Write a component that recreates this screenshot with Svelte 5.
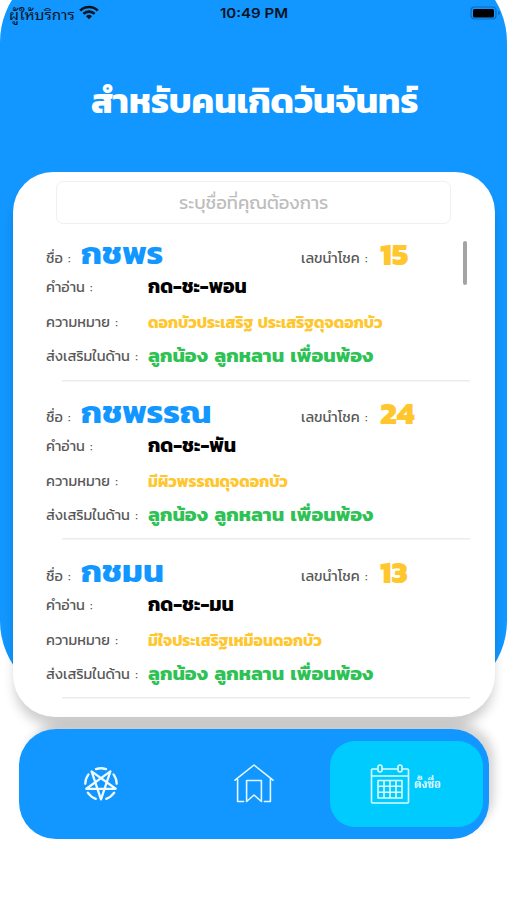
<script>
  const people = [
    { name: 'กชพร', nameW: 82, num: '15', read: 'กด-ชะ-พอน', readW: 99, mean: 'ดอกบัวประเสริฐ ประเสริฐดุจดอกบัว', meanW: 235 },
    { name: 'กชพรรณ', nameW: 130, num: '24', read: 'กด-ชะ-พัน', readW: 88, mean: 'มีผิวพรรณดุจดอกบัว', meanW: 140 },
    { name: 'กชมน', nameW: 83, num: '13', read: 'กด-ชะ-มน', readW: 86, mean: 'มีใจประเสริฐเหมือนดอกบัว', meanW: 174 }
  ];

  // Condenses or widens a label horizontally so that it fills the given width.
  function fit(node, width) {
    const apply = () => {
      node.style.transform = 'none';
      node.style.transform = `scaleX(${width / node.offsetWidth})`;
    };
    apply();
    document.fonts?.ready.then(apply);
  }
</script>

<div class="screen">
  <div class="backdrop"></div>
  <header class="status">
    <span class="carrier"><span class="t" use:fit={66}>ผู้ให้บริการ</span></span>
    <svg class="wifi" width="20" height="15" viewBox="0 0 20 15" fill="none" stroke="#07131f" stroke-width="2.6">
      <path d="M1.2 5.6a12.5 12.5 0 0 1 17.6 0M4.4 8.9a8 8 0 0 1 11.2 0" />
      <path d="M10 14.2 7 11.2a4.3 4.3 0 0 1 6 0z" fill="#07131f" stroke="none" />
    </svg>
    <span class="clock"><span class="t" use:fit={68}>10:49 PM</span></span>
    <svg class="battery" width="31" height="14" viewBox="0 0 31 14">
      <rect x="1" y="1" width="25" height="12" rx="3.5" fill="none" stroke="#0b6cc0" stroke-width="1.2" />
      <rect x="3" y="3" width="21" height="8.500" rx="1.5" fill="#000" />
      <path d="M28 5v4q2-.6 2-2t-2-2z" fill="#0b6cc0" />
    </svg>
  </header>
  <h1><span class="t" use:fit={327}>สำหรับคนเกิดวันจันทร์</span></h1>

  <main class="card">
    <div class="search"><span class="t" use:fit={149}>ระบุชื่อที่คุณต้องการ</span></div>
    <div class="list">
      {#each people as p}
        <section>
          <div class="row top">
            <span class="label short"><span class="t" use:fit={25}>ชื่อ :</span></span>
            <span class="name"><span class="t" use:fit={p.nameW}>{p.name}</span></span>
            <span class="label lucky"><span class="t" use:fit={67}>เลขนำโชค :</span></span>
            <span class="num"><span class="t" use:fit={p.num === '24' ? 34 : 28}>{p.num}</span></span>
          </div>
          <div class="row r2">
            <span class="label"><span class="t" use:fit={47}>คำอ่าน :</span></span>
            <span class="read"><span class="t" use:fit={p.readW}>{p.read}</span></span>
          </div>
          <div class="row r3">
            <span class="label"><span class="t" use:fit={72}>ความหมาย :</span></span>
            <span class="mean"><span class="t" use:fit={p.meanW}>{p.mean}</span></span>
          </div>
          <div class="row r4">
            <span class="label"><span class="t" use:fit={92}>ส่งเสริมในด้าน :</span></span>
            <span class="good"><span class="t" use:fit={225}>ลูกน้อง ลูกหลาน เพื่อนพ้อง</span></span>
          </div>
        </section>
      {/each}
    </div>
    <div class="scroll"></div>
  </main>

  <nav>
    <div class="item">
      <svg width="36" height="36" viewBox="-18 -18 36 36" fill="none" stroke="#effaff" stroke-width="2.3" stroke-linejoin="round">
        <path d="M0 15.3 9.4-12.6-14.7 4.8h29.4L-9.4-12.6z" />
        <path d="M-5-14.9a15.8 15.8 0 0 1 10 0M12.5-9.6a15.8 15.8 0 0 1 3.2 9.4M13.2 8.7a15.8 15.8 0 0 1-8 6.2M-5.2 14.9a15.8 15.8 0 0 1-8-6.2M-15.7-.2a15.8 15.8 0 0 1 3.2-9.4" stroke-linecap="round" />
      </svg>
    </div>
    <div class="item">
      <svg width="42" height="42" viewBox="0 0 42 42" fill="none" stroke="#e5f8ff" stroke-width="1.600" stroke-linecap="round" stroke-linejoin="round">
        <path d="M2 17.2 21 2l19 15.2M4.6 16v22.5h6M37.4 16v22.5h-6M13.6 38.5V17.5h14.8v21L21 32z" />
      </svg>
    </div>
    <div class="item active">
      <svg width="40" height="42" viewBox="0 0 40 42" fill="none" stroke="#dcfaff" stroke-width="1.600" stroke-linejoin="round">
        <path d="M8 6H2.5q-1 0-1 1v32q0 1 1 1h35q1 0 1-1V7q0-1-1-1H32M12 6h16M1.500 13h37" />
        <rect x="8" y="2" width="4" height="7" rx="2" /><rect x="28" y="2" width="4" height="7" rx="2" />
        <path d="M8 17.500h24v17.500H8zM14 17.500V35M20 17.500V35M26 17.500V35M8 23.300h24M8 29.200h24" />
      </svg>
      <span class="caption"><span class="t" use:fit={27}>ตั้งชื่อ</span></span>
    </div>
  </nav>
</div>

<style>
  :global(body) { background: #fff; }
  .screen {
    position: relative;
    isolation: isolate;
    box-sizing: border-box;
    width: 507px;
    height: 900px;
    overflow: hidden;
    background: #fff;
    font-family: Kanit, Prompt, "Noto Sans Thai", "Noto Sans", "Liberation Sans", sans-serif;
  }
  .backdrop {
    position: absolute;
    z-index: -1;
    top: -38px;
    left: 0;
    width: 507px;
    height: 739px;
    border-radius: 80px;
    background: #1197ff;
  }
  .t { display: inline-block; white-space: nowrap; transform-origin: left center; }
  .status { display: flex; align-items: center; height: 27px; color: #07131f; }
  .carrier { width: 70px; padding-left: 9px; font: 400 14px/25px "Noto Sans Thai Looped", Loma, Garuda, "Noto Sans Thai", "Liberation Sans", sans-serif; }
  .wifi { margin-top: -2px; }
  .clock { margin-left: 121px; width: 68px; font: 600 13.500px/27px Inter, sans-serif; }
  .battery { margin-left: 182px; margin-top: -1px; }
  h1 { margin: 49px 0 0 91px; height: 50px; font-size: 34px; line-height: 50px; font-weight: 700; color: #fff; }
  .card {
    position: relative;
    box-sizing: border-box;
    width: 482px;
    height: 545px;
    margin: 46px 0 0 13px;
    padding-top: 9px;
    border-radius: 40px 40px 42px 42px;
    background: #fff;
    box-shadow: 0 11px 12px -2px rgba(0, 0, 0, 0.2);
  }
  .search {
    box-sizing: border-box;
    width: 395px;
    height: 43px;
    margin-left: 43px;
    padding-left: 122px;
    border: 1.500px solid #f0f0f0;
    border-radius: 7px;
    font-size: 18px;
    line-height: 42px;
    color: #bdbdbd;
  }
  .list { padding-top: 12px; }
  section { height: 158.800px; box-sizing: border-box; padding-left: 33px; background: linear-gradient(#ebebeb, #ebebeb) 49px 143.500px / 408px 1.500px no-repeat; }
  .row { display: flex; align-items: baseline; height: 34px; line-height: 34px; }
  .top { height: 34px; }
  .r2 { height: 35px; }
  .label { width: 102px; font-size: 14.500px; word-spacing: 2px; color: #585858; }
  .label.short { width: 35px; }
  .label.lucky { width: 79px; }
  .label .t { vertical-align: 1px; }
  .name { width: 220px; font-size: 31px; font-weight: 700; color: #1197ff; }
  .num { font-size: 30px; line-height: 34px; font-weight: 800; color: #ffc62e; }
  .num .t { vertical-align: -1px; }
  .read { font-size: 19.500px; font-weight: 700; color: #000; }
  .mean { font-size: 15.500px; font-weight: 700; word-spacing: 1px; color: #ffc62e; }
  .good { font-size: 18.500px; font-weight: 700; word-spacing: 2px; color: #2dc253; }
  .scroll { position: absolute; top: 69px; left: 450px; width: 4px; height: 44px; border-radius: 2px; background: #a4a4a4; }
  nav {
    position: relative;
    display: flex;
    box-sizing: border-box;
    width: 470px;
    height: 110px;
    margin: 12px 0 0 19px;
    padding: 12px 6px;
    border-radius: 37px;
    background: #1197ff;
    box-shadow: 6px -7px 10px -1px rgba(0, 0, 0, 0.17);
  }
  .item { display: flex; flex: 1; align-items: center; justify-content: center; }
  .item.active { border-radius: 25px; background: #00cbff; }
  .caption { width: 29px; margin-left: 4px; padding-top: 2px; font: 700 12px/20px "Noto Serif Thai", Norasi, Kinnari, "Liberation Serif", serif; color: #f2fdff; }
</style>
